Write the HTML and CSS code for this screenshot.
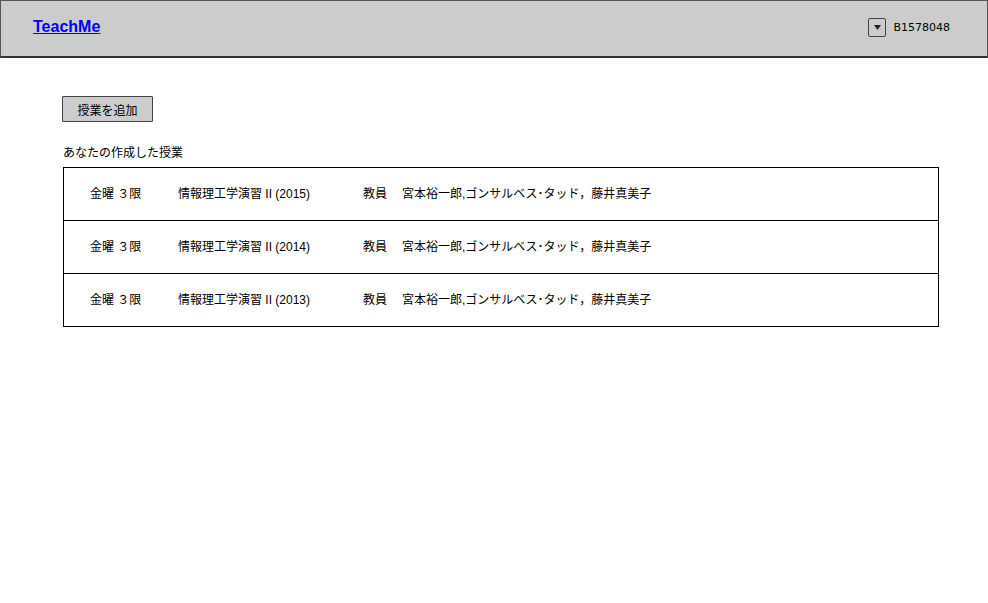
FILE: index.html
```html
<!DOCTYPE html>
<html lang="ja">
<head>
<meta charset="utf-8">
<title>TeachMe</title>
<link rel="stylesheet" href="styles.css">
</head>
<body>
<header class="topbar">
  <a class="logo" href="#">TeachMe</a>
  <div class="user">
    <span class="dd"><svg width="7" height="5" viewBox="0 0 7 5"><path d="M0 0H7L3.5 5Z" fill="#222"/></svg></span>
    <span class="uid">B1578048</span>
  </div>
</header>
<main class="content">
  <button class="add">授業を追加</button>
  <div class="label">あなたの作成した授業</div>
  <div class="list">
    <div class="row"><span class="c1">金曜 ３限</span><span class="c2">情報理工学演習 II (2015)</span><span class="c3">教員</span><span class="c4">宮本裕一郎,ゴンサルベス･タッド，藤井真美子</span></div>
    <div class="row"><span class="c1">金曜 ３限</span><span class="c2">情報理工学演習 II (2014)</span><span class="c3">教員</span><span class="c4">宮本裕一郎,ゴンサルベス･タッド，藤井真美子</span></div>
    <div class="row"><span class="c1">金曜 ３限</span><span class="c2">情報理工学演習 II (2013)</span><span class="c3">教員</span><span class="c4">宮本裕一郎,ゴンサルベス･タッド，藤井真美子</span></div>
  </div>
</main>
</body>
</html>
```
FILE: styles.css
```css
* { box-sizing: border-box; }
html, body { margin: 0; padding: 0; background: #fff; }
body {
  font-family: "Liberation Sans", "Noto Sans CJK JP", sans-serif;
  font-size: 12px;
  color: #000;
}
.topbar {
  height: 58px;
  background: #cccccc;
  border: 1px solid #555;
  border-bottom: 2px solid #333;
  display: flex;
  align-items: center;
  justify-content: space-between;
  padding: 0 37px 0 32px;
}
.logo {
  font-family: "Liberation Sans", sans-serif;
  font-weight: bold;
  font-size: 16px;
  color: #0000ff;
  text-decoration: underline;
  margin-top: -3px;
}
.user {
  display: flex;
  align-items: center;
  gap: 7px;
  margin-top: -3px;
}
.dd {
  width: 18px;
  height: 19px;
  border: 1.5px solid #444;
  border-radius: 2px;
  display: flex;
  align-items: center;
  justify-content: center;
}
.uid {
  font-family: "DejaVu Sans", sans-serif;
  font-size: 11px;
}
.content {
  padding: 38px 49px 0 63px;
}
.add {
  display: block;
  margin-left: -1px;
  width: 91px;
  height: 26px;
  background: #cccccc;
  border: 1.5px solid #444;
  border-radius: 1px;
  font-family: "Liberation Sans", "Noto Sans CJK JP", sans-serif;
  font-size: 12px;
  color: #000;
  padding: 0;
}
.label {
  margin-top: 23px;
  line-height: 16px;
  height: 16px;
}
.list {
  margin-top: 6px;
  border: 1px solid #000;
  width: 876px;
}
.row {
  height: 53px;
  display: flex;
  align-items: center;
  border-top: 1px solid #000;
  padding-left: 26px;
  padding-bottom: 3px;
}
.row:first-child { border-top: none; height: 52px; }
.c1 { width: 88px; }
.c2 { width: 185px; }
.c3 { width: 39px; }
```
